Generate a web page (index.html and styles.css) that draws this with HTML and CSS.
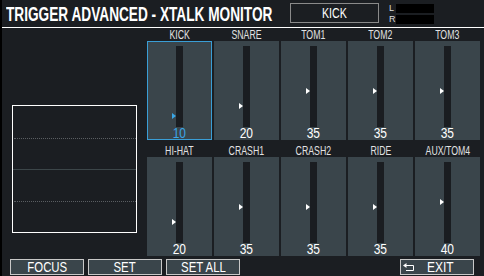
FILE: index.html
```html
<!DOCTYPE HTML>
<html>
  <head>
    <meta http-equiv="content-type" content="text/html; charset=utf-8">
    <title>Trigger Advanced - Xtalk Monitor</title>
    <link rel="stylesheet" href="styles.css">
    <script type="text/javascript">

var pads = [
  {name: "KICK", value: 10},
  {name: "SNARE", value: 20},
  {name: "TOM1", value: 35},
  {name: "TOM2", value: 35},
  {name: "TOM3", value: 35},
  {name: "HI-HAT", value: 20},
  {name: "CRASH1", value: 35},
  {name: "CRASH2", value: 35},
  {name: "RIDE", value: 35},
  {name: "AUX/TOM4", value: 40}
];
var focusIndex = 0;
var barHeight = 81;

function createNarrowText(text) {
  var span = document.createElement("span");
  span.setAttribute("class", "narrow");
  span.appendChild(document.createTextNode(text));
  return span;
}

function createPad(pad, index) {
  var div = document.createElement("div");
  div.setAttribute("class", "pad");

  var label = document.createElement("div");
  label.setAttribute("class", "padLabel");
  label.appendChild(createNarrowText(pad.name));
  div.appendChild(label);

  var cell = document.createElement("div");
  cell.setAttribute("class", index === focusIndex ? "padCell focused" : "padCell");

  var bar = document.createElement("div");
  bar.setAttribute("class", "padBar");
  var marker = document.createElement("div");
  marker.setAttribute("class", "padMarker");
  marker.style.top = (barHeight - pad.value - 4) + "px"; // marker points at the level
  bar.appendChild(marker);
  cell.appendChild(bar);

  var value = document.createElement("div");
  value.setAttribute("class", "padValue");
  value.appendChild(createNarrowText(pad.value.toString()));
  cell.appendChild(value);

  div.appendChild(cell);
  return div;
}

window.onload = function() {
  var grid = document.getElementById("padGrid");
  for (var i = 0; i < pads.length; ++i) {
    grid.appendChild(createPad(pads[i], i));
  }
}

    </script>
  </head>
  <body>
    <div id="screen">
      <div class="header">
        <div class="title"><span class="titleText">TRIGGER ADVANCED - XTALK MONITOR</span></div>
        <div class="padName"><span class="narrow">KICK</span></div>
        <div class="meter">
          <div class="meterRow"><span class="meterLabel">L</span><span class="meterBar"></span></div>
          <div class="meterRow"><span class="meterLabel">R</span><span class="meterBar"></span></div>
        </div>
      </div>

      <div class="main">
        <div class="wavePanel">
          <div class="waveBox">
            <div class="waveRow"></div>
            <div class="waveRow dotted"></div>
            <div class="waveRow center"></div>
            <div class="waveRow dotted"></div>
          </div>
        </div>
        <div id="padGrid" class="padGrid"></div>
      </div>

      <div class="footer">
        <div class="funcButton"><span class="narrow">FOCUS</span></div>
        <div class="funcButton"><span class="narrow">SET</span></div>
        <div class="funcButton"><span class="narrow">SET ALL</span></div>
        <div class="funcSpacer"></div>
        <div class="funcSpacer"></div>
        <div class="funcButton exitButton">
          <svg class="exitIcon" width="11" height="9" viewBox="0 0 11 9">
            <path d="M3 2.5H10.5V7.5H3" fill="none" stroke="#fff" stroke-width="1"/>
            <path d="M0 2.5L3.5 0V5Z" fill="#fff"/>
          </svg>
          <span class="narrow exitText">EXIT</span>
        </div>
      </div>
    </div>
  </body>
</html>
```

FILE: styles.css
```css
body {
  margin: 0;
  background-color: #000;
  font-family: "Liberation Sans", Arial, sans-serif;
  color: #fff;
}

#screen {
  width: 482px;
  height: 276px;
  margin-left: 2px;
  background-color: #1b1e22;
  overflow: hidden;
}

/* the panel font is a condensed one */
.narrow {
  display: inline-block;
  transform: scaleX(0.76);
}

/* header */
.header {
  height: 27px;
  border-bottom: 1px solid #fff;
  display: flex;
  align-items: flex-start;
}

.title {
  width: 284px;
  padding-left: 4px;
  font-size: 19.5px;
  font-weight: bold;
  line-height: 28px;
  white-space: nowrap;
}

.titleText {
  display: inline-block;
  transform: scaleX(0.7);
  transform-origin: left center;
}

.padName {
  box-sizing: border-box;
  width: 89px;
  height: 20px;
  margin-top: 3px;
  border: 1px solid #8a8a8a;
  font-size: 14px;
  line-height: 18px;
  text-align: center;
}

.meter {
  margin-left: 10px;
  margin-top: 4px;
  display: flex;
  flex-direction: column;
  gap: 2px;
}

.meterRow {
  display: flex;
  height: 9px;
}

.meterLabel {
  width: 7px;
  font-size: 9px;
  line-height: 9px;
  color: #ddd;
}

.meterBar {
  width: 38px;
  height: 9px;
  background-color: #000;
}

/* main area */
.main {
  display: flex;
}

.wavePanel {
  width: 135px;
  padding-left: 10px;
  padding-top: 77px;
}

.waveBox {
  box-sizing: border-box;
  width: 125px;
  height: 128px;
  border: 1px solid #fff;
  display: grid;
  grid-template-rows: repeat(4, 1fr);
}

.waveRow.dotted {
  border-top: 1px dotted #5a5e62;
  margin: 0 0 0 1px;
}

.waveRow.center {
  border-top: 1px solid #3c4649;
}

.padGrid {
  display: grid;
  grid-template-columns: repeat(5, 65px);
  column-gap: 2px;
  row-gap: 4px;
}

.padLabel {
  height: 13px;
  font-size: 12.5px;
  line-height: 15px;
  color: #e2e2e2;
  text-align: center;
  white-space: nowrap;
}

.padLabel .narrow {
  transform: scaleX(0.7);
}

.padCell {
  box-sizing: border-box;
  height: 99px;
  border: 1px solid #3a454b;
  background-color: #3a454b;
  padding-top: 4px;
}

.padCell.focused {
  border-color: #3a9ed6;
}

.padBar {
  position: relative;
  width: 7px;
  height: 81px;
  margin: 0 auto;
  background-color: #1a1d21;
}

.padMarker {
  position: absolute;
  left: -4px;
  width: 0;
  height: 0;
  border-left: 4px solid #fff;
  border-top: 3.5px solid transparent;
  border-bottom: 3.5px solid transparent;
}

.padValue {
  margin-top: -1px;
  font-size: 15px;
  line-height: 13px;
  text-align: center;
  color: #fff;
}

.padValue .narrow {
  transform: scaleX(0.8);
}

.focused .padMarker {
  border-left-color: #3aa6e6;
}

.focused .padValue {
  color: #3aa6e6;
}

/* function buttons */
.footer {
  margin-top: 3px;
  padding-left: 8px;
  display: grid;
  grid-template-columns: repeat(6, 74px);
  column-gap: 4px;
}

.funcButton {
  box-sizing: border-box;
  height: 16px;
  border: 1px solid #c8c8c8;
  background-color: #3a454b;
  font-size: 15px;
  line-height: 14px;
  text-align: center;
  white-space: nowrap;
}

.exitButton {
  display: flex;
  align-items: center;
  padding-left: 2px;
  text-align: left;
}

.exitIcon {
  margin-right: 13px;
}

.exitText {
  transform-origin: left center;
  transform: scaleX(0.8);
}
```
